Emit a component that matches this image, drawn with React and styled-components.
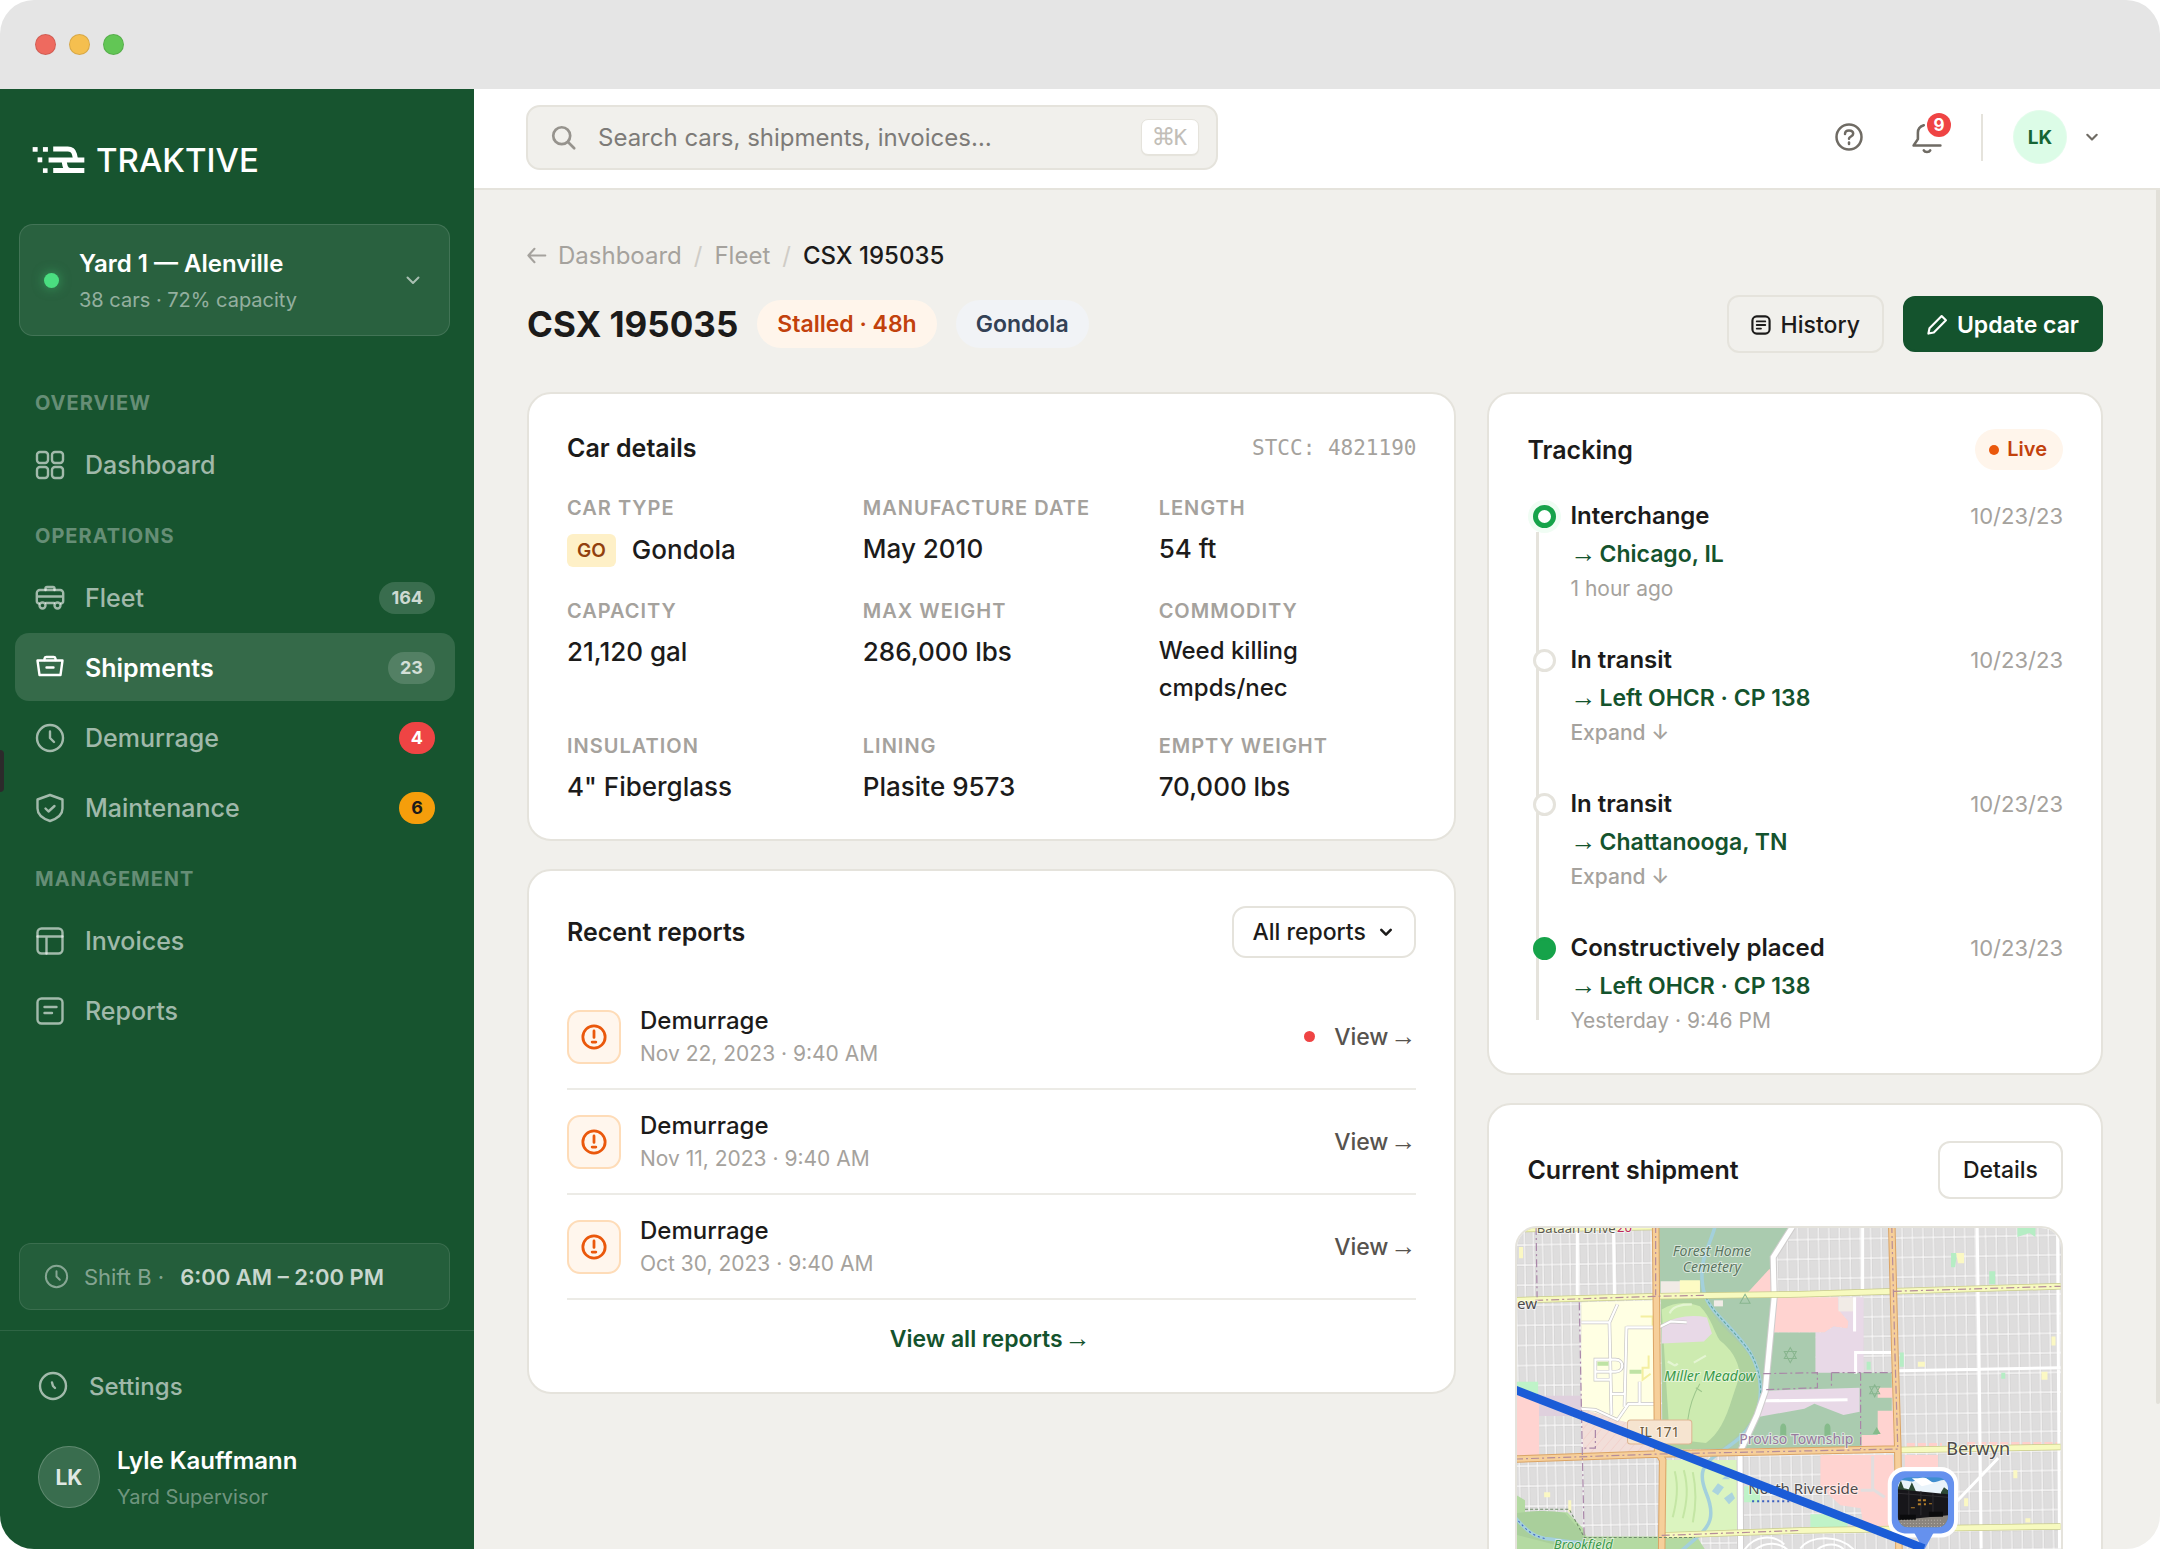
import * as React from 'react';
import styled, { createGlobalStyle, css } from 'styled-components';

const colors = {
  green: '#17542f',
  greenDeep: '#14532d',
  page: '#f1f0ec',
  line: '#e5e3dc',
  ink: '#1c1b1a',
  text: '#57534e',
  muted: '#a5a29d',
  orange: '#c2410c',
  red: '#ef4444'
};

const nav = [
  {
    title: 'Overview',
    items: [{ icon: 'dashboard', label: 'Dashboard' }]
  },
  {
    title: 'Operations',
    items: [
      { icon: 'fleet', label: 'Fleet', count: 164 },
      { icon: 'shipments', label: 'Shipments', count: 23, active: true },
      { icon: 'clock', label: 'Demurrage', count: 4, tone: 'danger' },
      { icon: 'shield', label: 'Maintenance', count: 6, tone: 'warning' }
    ]
  },
  {
    title: 'Management',
    items: [
      { icon: 'invoices', label: 'Invoices' },
      { icon: 'reports', label: 'Reports' }
    ]
  }
];

const details = [
  { label: 'Car type', value: 'Gondola', code: 'GO' },
  { label: 'Manufacture date', value: 'May 2010' },
  { label: 'Length', value: '54 ft' },
  { label: 'Capacity', value: '21,120 gal' },
  { label: 'Max weight', value: '286,000 lbs' },
  { label: 'Commodity', value: 'Weed killing cmpds/nec', small: true },
  { label: 'Insulation', value: '4" Fiberglass' },
  { label: 'Lining', value: 'Plasite 9573' },
  { label: 'Empty weight', value: '70,000 lbs' }
];

const reports = [
  { date: 'Nov 22, 2023 · 9:40 AM', unread: true },
  { date: 'Nov 11, 2023 · 9:40 AM' },
  { date: 'Oct 30, 2023 · 9:40 AM' }
];

const events = [
  { title: 'Interchange', place: 'Chicago, IL', note: '1 hour ago', state: 'current' },
  { title: 'In transit', place: 'Left OHCR · CP 138' },
  { title: 'In transit', place: 'Chattanooga, TN' },
  {
    title: 'Constructively placed',
    place: 'Left OHCR · CP 138',
    note: 'Yesterday · 9:46 PM',
    state: 'done'
  }
];

const shapes = {
  dashboard: (
    <>
      <rect x="1" y="1" width="11" height="11" rx="3" />
      <rect x="16" y="1" width="11" height="11" rx="3" />
      <rect x="1" y="16" width="11" height="11" rx="3" />
      <rect x="16" y="16" width="11" height="11" rx="3" />
    </>
  ),
  fleet: (
    <>
      <path d="M9.5 6V4.5a1.5 1.5 0 0 1 1.5-1.5h6a1.5 1.5 0 0 1 1.5 1.5V6" />
      <path d="M3 19.5a2.5 2.5 0 0 1-2.200-2.500V9A3 3 0 0 1 4 6h20a3 3 0 0 1 3.200 3v8a2.500 2.500 0 0 1-2.200 2.500M10 19h8M1 12.500h26" />
      <circle cx="6.500" cy="21.500" r="3" />
      <circle cx="21.500" cy="21.500" r="3" />
    </>
  ),
  shipments: (
    <>
      <path d="M8.500 6V4.500A2 2 0 0 1 10.500 3h7a2 2 0 0 1 2 1.500V6" />
      <path d="M1.500 6.500h25L24.500 21h-21zM10.500 13.500h7" />
    </>
  ),
  clock: (
    <>
      <circle cx="14" cy="14" r="13" />
      <path d="M14 7.500v6.500l4 4" />
    </>
  ),
  settings: (
    <>
      <circle cx="14" cy="14" r="13" />
      <path d="M13 10.500l1 3.500 2 2" />
    </>
  ),
  shield: (
    <>
      <path d="M14 1l12.500 4.500v9c0 6-5 10-12.500 12.500C6.500 24.500 1.500 20.500 1.500 14.500v-9z" />
      <path d="M9.500 14.500l3 3 6-5.500" />
    </>
  ),
  invoices: (
    <>
      <rect x="1.500" y="1.500" width="25" height="25" rx="4" />
      <path d="M1.500 9.500h25M10.500 9.500v17" />
    </>
  ),
  reports: (
    <>
      <rect x="1.500" y="1.500" width="25" height="25" rx="4" />
      <path d="M8.500 10h12M8.500 16h7.500" />
    </>
  ),
  history: (
    <>
      <rect x="2" y="2" width="24" height="24" rx="6" />
      <path d="M8 9h12M8 14h12M8 19h6" strokeWidth="2.500" />
    </>
  ),
  pencil: <path d="M2 26l1.500-7.500L20.500 1.500l6 6L9.500 24.500z" />,
  alert: (
    <>
      <circle cx="14" cy="14" r="12" />
      <path d="M14 7.500v7M12 19.500h4" />
    </>
  ),
  search: (
    <>
      <circle cx="12" cy="12" r="9.500" />
      <path d="M19 19l7 7" />
    </>
  ),
  help: (
    <>
      <circle cx="14" cy="14" r="12.500" />
      <path d="M10 11c0-2.500 2-3.500 4-3.500s4.200 1 4.200 3.300c0 2.700-4.200 2.700-4.200 5" />
      <path d="M14 19.500v1.500" />
    </>
  ),
  bell: (
    <>
      <path d="M11 3C7.500 4 5.500 6.500 5.500 10v6L1.500 22h25" />
      <path d="M11 26.500c1 2 5 2 6 0" />
    </>
  ),
  chevron: <path d="M3 9l11 11 11-11" />,
  back: <path d="M27 14H2M11 4L2 14l9 10" />
};

const Icon = ({ name, size = 28, weight = 2.400 }) => (
  <Glyph viewBox="0 0 28 28" $size={size} strokeWidth={weight} aria-hidden="true">
    {shapes[name]}
  </Glyph>
);

const Logo = () => (
  <LogoMark viewBox="0 0 160 84" aria-hidden="true">
    <g fill="#fff">
      <rect x="2" y="3" width="15" height="14" />
      <rect x="33" y="3" width="15" height="14" />
      <rect x="17" y="34" width="14" height="15" />
      <rect x="33" y="67" width="14" height="14" />
    </g>
    <g fill="none" stroke="#fff" strokeWidth="15">
      <path d="M64 9h44q16 0 20 15l4 18" />
      <path d="M50 42h108" />
      <path d="M97 42q2 32 18 32" />
      <path d="M64 74h94" />
    </g>
  </LogoMark>
);

const Sidebar = () => (
  <Side>
    <Brand href="#home">
      <Logo />
      TRAKTIVE
    </Brand>
    <YardButton type="button">
      <YardDot />
      <Stack>
        <SideName>Yard 1 — Alenville</SideName>
        <SideNote>38 cars · 72% capacity</SideNote>
      </Stack>
      <Icon name="chevron" size={14} weight={4} />
    </YardButton>
    <Nav aria-label="Main">
      {nav.map(group => (
        <React.Fragment key={group.title}>
          <NavTitle>{group.title}</NavTitle>
          <NavList>
            {group.items.map(item => (
              <li key={item.label}>
                <NavLink href={`#${item.label.toLowerCase()}`} $active={item.active}>
                  <Icon name={item.icon} />
                  <NavText>{item.label}</NavText>
                  {item.count && <Count $tone={item.tone}>{item.count}</Count>}
                </NavLink>
              </li>
            ))}
          </NavList>
        </React.Fragment>
      ))}
    </Nav>
    <Shift>
      <Icon name="clock" size={23} />
      <span>Shift B ·</span>
      <strong>6:00 AM – 2:00 PM</strong>
    </Shift>
    <SideFooter>
      <SettingsLink href="#settings">
        <Icon name="settings" />
        Settings
      </SettingsLink>
      <Profile>
        <Avatar $size={62}>LK</Avatar>
        <Stack>
          <SideName>Lyle Kauffmann</SideName>
          <SideNote $dim>Yard Supervisor</SideNote>
        </Stack>
      </Profile>
    </SideFooter>
  </Side>
);

const TopBar = () => (
  <Top>
    <SearchBox>
      <Icon name="search" weight={3} size={25} />
      <SearchInput
        type="search"
        aria-label="Search"
        placeholder="Search cars, shipments, invoices…"
      />
      <Kbd>
        <span>⌘</span>K
      </Kbd>
    </SearchBox>
    <TopActions>
      <IconButton type="button" aria-label="Help">
        <Icon name="help" weight={2.500} />
      </IconButton>
      <IconButton type="button" aria-label="Notifications">
        <Icon name="bell" size={30} />
        <Badge>9</Badge>
      </IconButton>
      <UserButton type="button">
        <Avatar $size={54} $light>LK</Avatar>
        <Icon name="chevron" size={12} weight={5} />
      </UserButton>
    </TopActions>
  </Top>
);

const CarDetails = () => (
  <Card $bottom={32}>
    <CardHead $height={32} $gap={30}>
      <CardTitle>Car details</CardTitle>
      <Stcc>STCC: 4821190</Stcc>
    </CardHead>
    <DetailGrid>
      {details.map(item => (
        <div key={item.label}>
          <DetailLabel>{item.label}</DetailLabel>
          <DetailValue $small={item.small} $tall={!!item.code}>
            {item.code && <CarCode>{item.code}</CarCode>}
            {item.value}
          </DetailValue>
        </div>
      ))}
    </DetailGrid>
  </Card>
);

const RecentReports = () => (
  <Card $top={35} $bottom={37}>
    <CardHead $height={52} $gap={27}>
      <CardTitle>Recent reports</CardTitle>
      <SelectWrap>
        <Select aria-label="Filter reports" defaultValue="all">
          <option value="all">All reports</option>
        </Select>
        <Icon name="chevron" size={12} weight={6} />
      </SelectWrap>
    </CardHead>
    <ul>
      {reports.map(report => (
        <ReportRow key={report.date}>
          <ReportIcon>
            <Icon name="alert" size={26} weight={3} />
          </ReportIcon>
          <Stack>
            <ReportName>Demurrage</ReportName>
            <Note>{report.date}</Note>
          </Stack>
          {report.unread && <UnreadDot />}
          <ViewLink href="#report">
            View<Arrow>→</Arrow>
          </ViewLink>
        </ReportRow>
      ))}
    </ul>
    <ViewAll href="#reports">
      View all reports<Arrow>→</Arrow>
    </ViewAll>
  </Card>
);

const Tracking = () => (
  <Card $top={35} $bottom={36}>
    <CardHead $height={41} $gap={26}>
      <CardTitle>Tracking</CardTitle>
      <Live>Live</Live>
    </CardHead>
    <Timeline>
      {events.map((event, i) => (
        <Event key={i}>
          <Marker $state={event.state} />
          <div>
            <EventTitle>{event.title}</EventTitle>
            <EventPlace>
              <Arrow>→</Arrow>
              {event.place}
            </EventPlace>
            {event.note ? <Note>{event.note}</Note> : <Expand type="button">Expand ↓</Expand>}
          </div>
          <EventDate>10/23/23</EventDate>
        </Event>
      ))}
    </Timeline>
  </Card>
);

const RouteMap = () => (
  <MapSvg viewBox="2 3 541 400" preserveAspectRatio="xMinYMin slice" role="img" aria-label="Route map">
    <defs>
      <pattern id="blocksWest" width="9" height="20" patternUnits="userSpaceOnUse" patternTransform="rotate(-1)">
        <rect width="9" height="20" fill="#f8f7f7" />
        <rect x="0.800" y="0.800" width="7.600" height="18.500" fill="#c9c8c8" />
        <rect x="1.200" y="1.200" width="6.800" height="17.700" fill="#dedddd" />
      </pattern>
      <pattern id="blocksEast" width="10.400" height="19.500" patternUnits="userSpaceOnUse" patternTransform="rotate(-1)">
        <rect width="10.400" height="19.500" fill="#f8f7f7" />
        <rect x="0.800" y="0.800" width="9" height="18" fill="#c9c8c8" />
        <rect x="1.200" y="1.200" width="8.200" height="17.200" fill="#dedddd" />
      </pattern>
      <pattern id="hatch" width="7" height="7" patternUnits="userSpaceOnUse" patternTransform="rotate(40)">
        <rect width="7" height="7" fill="#f2ded9" />
        <path d="M0 0v7" stroke="#f3c9c4" />
      </pattern>
      <clipPath id="photo">
        <rect x="381" y="251" width="50" height="50" rx="11" />
      </clipPath>
    </defs>
    <rect width="260" height="403" fill="url(#blocksWest)" />
    <rect x="224" width="321" height="403" fill="url(#blocksEast)" />

    {/* land use */}
    <path d="M66 77l75-2 2 128-38-8-39-12z" fill="#ffffe3" />
    <path d="M66 183l40 12 37 10v20l-75 3z" fill="url(#hatch)" />
    <path d="M0 169h24v60H0z" fill="#ffd3d0" />
    <path d="M0 156h23v12H0z" fill="#bff3c8" />
    <path d="M24 170h42v20H24z" fill="#dfd0dd" />
    <path d="M143 2h133l-19 30-2 38H143z" fill="#aacbaf" />
    <path d="M145 56h39v12h-39z" fill="#f1ebe6" />
    <path d="M164 55h20v14h-20z" fill="#fdfbc4" />
    <path d="M231 68l22-24h3v25z" fill="#ffd3d0" />
    <path d="M190 72h68l-9 90-8 27-15 34h-79V72z" fill="#aacbaf" />
    <path d="M145 72h45c4 18 18 30 30 42 14 14 22 28 24 42 2 24-8 46-38 66l-59 2z" fill="#afd29f" />
    <path d="M146 84c14-8 26-8 38-3 12 12 14 26 20 34 10 8 18 18 20 34l-8 24c-6 20-14 36-26 44l-36-4z" fill="#cdebb0" />
    <path d="M146 99c14-8 30-10 45-7l5 16-8 8-42 2z" fill="#e8d9e7" />
    <path d="M198 75h9v6h-9z" fill="#f1ebe6" />
    <path d="M259 72h63v12l10 12-1 7-14-2-9 6h-52z" fill="#ffd3d0" />
    <path d="M322 72h25v76h-48v-41h9l9-6 14 2 1-7-10-12z" fill="#e8d9e7" />
    <path d="M322 72h15v14h-15z" fill="#f1ebe6" />
    <path d="M256 107h43v40h76v75H226l11-26 10-34z" fill="#aacbaf" />
    <path d="M249 165l94-3v24l-16 3-29-11-10 5-46 8z" fill="#e8d9e7" />
    <path d="M361 162h15v10h-15zM361 185h16v39h-32v-15h16z" fill="#ffd3d0" />
    <path d="M304 229h72l5 72-34-1-3-18-20-3-20-18z" fill="#ffd3d0" />
    <path d="M388 229h33v16h-33z" fill="#ffd3d0" />
    <path d="M294 288h37v15h-37zM228 260h16v16h-16z" fill="#bff3c8" />
    <path d="M150 234h72v72h-72z" fill="#dbf4bf" />
    <path d="M0 268l10 6v12h42l16 16 3 8h110l10 16v74H0z" fill="#b4daa2" />
    <path d="M0 287c20-3 38-3 50 0l16 18 3 9-30 4-39-10z" fill="#a9cf9b" />
    <path d="M159 245c4 16 2 30-2 46M168 244c5 18 3 32-1 48M177 246c3 14 4 30 0 50" fill="none" stroke="#c4e6a4" strokeWidth="2" />
    <path d="M196 265l6-8 6 4-6 8zM208 272l8-6 3 6-6 6zM206 253l4-4 4 4z" fill="#abd4de" />

    {/* little parks */}
    <g fill="#b5edc4">
      <path d="M500 2h18v10l-6-4-6 2-6 2zM434 28h6l-2 14h-4zM472 46h6v13h-6zM383 127h4v14h-4zM484 147h4v6h-4zM350 136h4v8h-4z" />
    </g>
    <g fill="#fbf8c3">
      <path d="M439 28h8v10h-6zM534 111h4v9h-4zM524 146h6v8h-6zM401 136h7v5h-7zM496 244h4v8h-4zM447 272h4v8h-4zM508 292h5v4h-5zM4 22h4v11H4zM29 266h6v5h-6zM53 274h3v12h-3z" />
    </g>
    <path d="M390 219h35M450 218h90" stroke="#ffcfcb" strokeWidth="4" strokeDasharray="8 3" />

    {/* loops inside the hospital campus */}
    <g fill="none" stroke="#c6c4c4" strokeWidth="3.500">
      <path d="M66 97h28l8-18M94 97l2 92M66 183l14 1 22 10 11-16h28M111 101l-2 80M96 168h14M111 102h32l12-6 16 1M80 134h20c9 0 9 12 0 12H80zM80 146v8h16M124 156v22" />
    </g>
    <g fill="none" stroke="#fff" strokeWidth="2.200">
      <path d="M66 97h28l8-18M94 97l2 92M66 183l14 1 22 10 11-16h28M111 101l-2 80M96 168h14M111 102h32l12-6 16 1M80 134h20c9 0 9 12 0 12H80zM80 146v8h16M124 156v22" />
      <path d="M152 136c6 2 6 6 10 2M178 137l12-7M154 88c2-6 10-9 22-9" stroke="#e4f5d2" />
    </g>
    <path d="M82 136h11v4H82zM114 144h12v4h-12z" fill="#bfe3a5" />
    <path d="M133 130v12h-6v12l8-6M125 91h12v9" fill="none" stroke="#f4efa0" strokeWidth="2" />
    <path d="M172 194c2-16 6-26 12-36M180 162l6 4" fill="none" stroke="#9dc68c" />

    {/* water */}
    <g fill="none" stroke="#a3d0dc" strokeWidth="3.500">
      <path d="M199 2c-6 20-13 30-13 45 0 20 4 28 12 38 12 14 24 24 36 42 14 24 13 50 2 70-8 14-22 22-31 29-20 12-22 22-15 40 10 24 4 34-10 46l-14 12" />
      <path d="M0 291c8 8 14 18 30 21 18 2 24 4 40 4" />
    </g>
    <path d="M0 291c8 8 14 18 30 21" fill="none" stroke="#3c5fc0" strokeDasharray="2 3" />
    <path d="M190 72c10 20 34 38 46 58 10 20 12 44 2 62" fill="none" stroke="#5fa59d" strokeDasharray="3 2" />

    {/* white streets */}
    <g fill="none" stroke="#fff" strokeWidth="3">
      <path d="M62 2v68M98 2l1 68M460 2l2 140 2 180M346 2v64M540 2l2 320M382 145l161-3M249 175l82-1M338 72v34M339 148v-21h36M437 278l44-46" />
      <path d="M356 230v33l12 8M344 264h12" stroke="#e2dede" />
    </g>
    <path d="M276 2l-19 30 1 40-9 94-8 23-17 37 1 174" fill="none" stroke="#cfcdcd" strokeWidth="7" />
    <path d="M276 2l-19 30 1 40-9 94-8 23-17 37 1 174" fill="none" stroke="#fff" strokeWidth="5" />
    <path d="M228 324c10-16 30-16 40-6M238 324c12-10 26-8 34 0M284 322c10-14 40-14 54 2M300 324c8-8 22-8 28 0M400 324c14-18 26-22 40-20" fill="none" stroke="#fff" strokeWidth="2" />

    {/* arterials, casing first */}
    <g fill="none" stroke="#c9cc8c" strokeWidth="6.500">
      <path d="M0 4l140-2M0 75l140-4 144-2 93-3 166-5M382 224l161-3M146 309l138-5 259-4" />
    </g>
    <g fill="none" stroke="#f7fabf" strokeWidth="5">
      <path d="M0 4l140-2M0 75l140-4 144-2 93-3 166-5M382 224l161-3M146 309l138-5 259-4" />
    </g>
    <g fill="none" stroke="#dba465" strokeWidth="7.500">
      <path d="M140 0l2 226 5 8-1 90v76M0 233l142-5 142-3 97-2M375 0l3 122 3 100 2 178" />
    </g>
    <g fill="none" stroke="#f6cf9a" strokeWidth="5.500">
      <path d="M140 0l2 226 5 8-1 90v76M0 233l142-5 142-3 97-2M375 0l3 122 3 100 2 178" />
    </g>
    <g fill="none" stroke="#b58d9a" strokeWidth="1.200" strokeDasharray="8 3 2 3">
      <path d="M20 75l120-4 50-1M377 66l166-5M0 233l142-5 142-3 97-2M375 0l3 122 3 100M140 0v70M146 309l138-5" />
      <path d="M21 2l1 70M64 77l3 150 2 90M247 148l54-1v15l-54 2M315 147v15M344 147v76M315 147h60M80 204v18H66" stroke="#a986a8" />
    </g>
    <path d="M10 283h44l15 28h110" fill="none" stroke="#6e8a6a" strokeDasharray="3 2" />
    <path d="M236 275h40" stroke="#3c5fc0" strokeWidth="2" strokeDasharray="2 3" />
    <path d="M268 133l6-11 6 11zM268 126h12l-6 11zM224 78l5-9 5 9zM353 168l5-9 5 9zM353 161h10l-5 10z" fill="none" stroke="#88b58e" />
    <path d="M264 210v-8c0-6 6-6 6 0v8zM308 210v-8c0-6 6-6 6 0v8zM356 208l4-7 4 7z" fill="#86bb8b" />

    <rect x="112" y="194" width="64" height="24" rx="3" fill="#f6e4d0" stroke="#ddb592" />
    <MapText x="144" y="211" $size={14} $fill="#6a5738">IL 171</MapText>
    <MapText x="196" y="31" $size={14} $fill="#5b7561" $italic>Forest Home</MapText>
    <MapText x="196" y="47" $size={14} $fill="#5b7561" $italic>Cemetery</MapText>
    <MapText x="194" y="155" $size={14} $fill="#38984a" $italic>Miller Meadow</MapText>
    <MapText x="280" y="218" $size={14} $fill="#977a9e">Proviso Township</MapText>
    <MapText x="287" y="268" $size={15} $fill="#4d4b4b">North Riverside</MapText>
    <MapText x="461" y="229" $size={18} $fill="#4d4b4b">Berwyn</MapText>
    <MapText x="12" y="84" $size={15} $fill="#4d4b4b">ew</MapText>
    <MapText x="68" y="322" $size={13} $fill="#38984a" $italic>Brookfield</MapText>
    <MapText x="61" y="8" $size={13} $fill="#5c5a50">Bataan Drive</MapText>
    <MapText x="109" y="7" $size={13} $fill="#c0285a">20</MapText>

    {/* pin with the car photo */}
    <rect x="373" y="243" width="66" height="66" rx="15" fill="#6591ee" stroke="#fff" strokeWidth="4" />
    <path d="M394 300h26l-13 24z" fill="#6591ee" />
    <g clipPath="url(#photo)">
      <rect x="381" y="251" width="50" height="50" fill="#3f8ed0" />
      <path d="M381 256c6-5 12 2 18-2s10-3 14 1 12-4 18 0v16h-50z" fill="#e9f3fa" />
      <path d="M395 252h14l8 5-12 3z" fill="#fff" />
      <path d="M381 262l3-8 3 8 5 1 3-7 4 9h-18zM424 266l3-5 4 3v8h-7z" fill="#2d4a35" />
      <path d="M381 288l50-6v19h-50z" fill="#8b857e" />
      <path d="M381 263l50 5v21l-50 5z" fill="#17161a" />
      <path d="M381 267l50 4M392 264v26M404 265v24M416 267v20" stroke="#2f2d31" />
      <path d="M401 273h3v2h-3zM406 273h3v2h-3zM401 277h3v2h-3zM407 277h2v2h-2zM394 281h4v1h-4zM412 277h3v1h-3z" fill="#b57f2b" />
      <path d="M383 291h16M412 288h14" stroke="#0b0b0d" strokeWidth="5" />
      <path d="M381 297h50M384 294h40M390 300h36" stroke="#b5aea6" strokeDasharray="1 2" />
    </g>
    <path d="M0 164l407 158" stroke="#1b5cd7" strokeWidth="8.500" />
  </MapSvg>
);

const App = () => (
  <>
    <GlobalStyle />
    <Window>
      <TitleBar>
        <Light $color="#ee6a5f" />
        <Light $color="#f5bf4f" />
        <Light $color="#62c655" />
      </TitleBar>
      <Shell>
        <EdgeHandle />
        <Sidebar />
        <Main>
          <TopBar />
          <Scroll>
            <Content>
              <Crumbs aria-label="Breadcrumb">
                <Icon name="back" size={19} weight={3} />
                <a href="#dashboard">Dashboard</a>
                <i>/</i>
                <a href="#fleet">Fleet</a>
                <i>/</i>
                <b>CSX 195035</b>
              </Crumbs>
              <PageHead>
                <PageTitle>CSX 195035</PageTitle>
                <Tag $warm>Stalled · 48h</Tag>
                <Tag>Gondola</Tag>
                <PageActions>
                  <Button type="button">
                    <Icon name="history" size={20} weight={3} />
                    History
                  </Button>
                  <Button type="button" $primary>
                    <Icon name="pencil" size={20} weight={3} />
                    Update car
                  </Button>
                </PageActions>
              </PageHead>
              <Columns>
                <Column>
                  <CarDetails />
                  <RecentReports />
                </Column>
                <Column>
                  <Tracking />
                  <Card $top={35}>
                    <CardHead $height={59} $gap={27}>
                      <CardTitle>Current shipment</CardTitle>
                      <Button type="button" $plain>Details</Button>
                    </CardHead>
                    <MapFrame>
                      <RouteMap />
                    </MapFrame>
                  </Card>
                </Column>
              </Columns>
            </Content>
            <ScrollThumb />
          </Scroll>
        </Main>
      </Shell>
    </Window>
  </>
);

const GlobalStyle = createGlobalStyle`
  * {
    box-sizing: border-box;
  }
  body {
    margin: 0;
    background: #fff;
    color: ${colors.ink};
    font-family: Inter, 'Liberation Sans', sans-serif;
    font-size: 24px;
  }
  a {
    color: inherit;
    text-decoration: none;
  }
  button, input, select {
    font: inherit;
    color: inherit;
  }
  h1, h2, p, ul, ol, dl {
    margin: 0;
    padding: 0;
    list-style: none;
  }
`;

const Window = styled.div`
  display: flex;
  flex-direction: column;
  height: calc(100vh - 1px);
  border-radius: 34px;
  overflow: hidden;
`;

const TitleBar = styled.div`
  display: flex;
  flex: none;
  align-items: center;
  gap: 13px;
  height: 89px;
  padding: 0 35px;
  background: #e5e5e5;
`;

const Light = styled.span`
  width: 21px;
  height: 21px;
  border: 1px solid rgba(0, 0, 0, 0.12);
  border-radius: 50%;
  background: ${({ $color }) => $color};
`;

const Shell = styled.div`
  position: relative;
  display: flex;
  flex: 1;
  min-height: 0;
`;

const EdgeHandle = styled.span`
  position: absolute;
  top: 661px;
  left: 0;
  width: 4px;
  height: 42px;
  border-radius: 0 4px 4px 0;
  background: #2c2a2b;
`;

const Glyph = styled.svg`
  flex: none;
  width: ${({ $size }) => $size}px;
  height: ${({ $size }) => $size}px;
  fill: none;
  stroke: currentColor;
  stroke-linecap: round;
  stroke-linejoin: round;
  overflow: visible;
`;

const Stack = styled.div`
  flex: 1;
  min-width: 0;
  text-align: left;
`;

const Arrow = styled.span`
  margin: 0 3px 0 2px;
  font-family: 'Liberation Sans', sans-serif;
  font-size: 26px;
  font-weight: 400;
  line-height: 1;
`;

const Side = styled.aside`
  display: flex;
  flex: none;
  flex-direction: column;
  width: 474px;
  background: ${colors.green};
  color: rgba(255, 255, 255, 0.6);
`;

const Brand = styled.a`
  display: flex;
  align-items: center;
  gap: 11px;
  height: 142px;
  padding: 0 32px;
  color: #fff;
  font-size: 33px;
  font-weight: 500;
`;

const LogoMark = styled.svg`
  width: 53px;
  height: 28px;
`;

const YardButton = styled.button`
  display: flex;
  align-items: center;
  gap: 20px;
  height: 112px;
  margin: -7px 24px 29px 19px;
  padding: 0 29px 0 24px;
  border: 1px solid rgba(255, 255, 255, 0.12);
  border-radius: 14px;
  background: rgba(255, 255, 255, 0.08);
`;

const YardDot = styled.span`
  width: 15px;
  height: 15px;
  border-radius: 50%;
  background: #4ade80;
  box-shadow: 0 0 12px rgba(74, 222, 128, 0.5);
`;

const SideName = styled.div`
  color: #fff;
  font-size: 24px;
  font-weight: 600;
  line-height: 40px;
`;

const SideNote = styled.div`
  color: rgba(255, 255, 255, ${({ $dim }) => ($dim ? 0.4 : 0.5)});
  font-size: 20px;
  line-height: 32px;
`;

const Nav = styled.nav`
  flex: 1;
  padding: 0 19px 0 15px;
`;

const NavTitle = styled.h2`
  padding: 24px 20px 13px;
  color: rgba(255, 255, 255, 0.35);
  font-size: 20px;
  font-weight: 700;
  letter-spacing: 1px;
  line-height: 28px;
  text-transform: uppercase;
`;

const NavList = styled.ul`
  display: grid;
  gap: 2px;
`;

const NavLink = styled.a`
  display: flex;
  align-items: center;
  gap: 21px;
  height: 68px;
  padding: 1px 20px 0 21px;
  border-radius: 14px;
  font-size: 25px;
  font-weight: 500;
  ${({ $active }) =>
    $active &&
    css`
      background: rgba(255, 255, 255, 0.13);
      color: #fff;
      font-weight: 600;
    `};
`;

const NavText = styled.span`
  flex: 1;
`;

const tones = {
  danger: css`
    background: ${colors.red};
    color: #fff;
  `,
  warning: css`
    background: #f59e0b;
    color: ${colors.ink};
  `
};

const Count = styled.span`
  padding: 0 12px;
  border-radius: 16px;
  background: rgba(255, 255, 255, 0.15);
  color: rgba(255, 255, 255, 0.75);
  font-size: 18px;
  font-weight: 700;
  line-height: 32px;
  ${({ $tone }) => tones[$tone]};
`;

const Shift = styled.div`
  display: flex;
  align-items: center;
  gap: 16px;
  height: 67px;
  margin: 0 24px 20px 19px;
  padding: 0 25px;
  border: 1px solid rgba(255, 255, 255, 0.1);
  border-radius: 12px;
  background: rgba(255, 255, 255, 0.06);
  color: rgba(255, 255, 255, 0.45);
  font-size: 22px;

  strong {
    color: rgba(255, 255, 255, 0.75);
    font-weight: 600;
  }
`;

const SideFooter = styled.div`
  padding: 22px 0 27px 38px;
  border-top: 1px solid rgba(255, 255, 255, 0.1);
`;

const SettingsLink = styled.a`
  display: flex;
  align-items: center;
  gap: 22px;
  height: 66px;
  padding-left: 1px;
  font-weight: 500;
`;

const Profile = styled.div`
  display: flex;
  align-items: center;
  gap: 17px;
  height: 90px;
  margin-top: 13px;
`;

const Avatar = styled.span`
  display: grid;
  flex: none;
  place-items: center;
  width: ${({ $size }) => $size}px;
  height: ${({ $size }) => $size}px;
  border: 1px solid rgba(255, 255, 255, 0.2);
  border-radius: 50%;
  background: ${({ $light }) => ($light ? '#dcfce7' : 'rgba(255, 255, 255, 0.15)')};
  color: ${({ $light }) => ($light ? '#166534' : 'rgba(255, 255, 255, 0.85)')};
  font-size: ${({ $light }) => ($light ? 19 : 21)}px;
  font-weight: 700;
`;

const Main = styled.main`
  display: flex;
  flex: 1;
  flex-direction: column;
  min-width: 0;
  background: ${colors.page};
`;

const Top = styled.header`
  display: flex;
  flex: none;
  align-items: center;
  justify-content: space-between;
  height: 101px;
  padding: 0 62px 3px 52px;
  border-bottom: 2px solid ${colors.line};
  background: #fff;
`;

const SearchBox = styled.label`
  display: flex;
  align-items: center;
  gap: 22px;
  width: 692px;
  height: 65px;
  padding: 0 17px 0 23px;
  border: 2px solid ${colors.line};
  border-radius: 14px;
  background: ${colors.page};
  color: #96938d;
`;

const SearchInput = styled.input`
  flex: 1;
  min-width: 0;
  padding: 0;
  border: 0;
  outline: 0;
  background: none;
  color: ${colors.ink};

  &::placeholder {
    color: #7d7b78;
    opacity: 1;
  }
`;

const Kbd = styled.kbd`
  display: flex;
  align-items: center;
  height: 36px;
  padding: 0 11px;
  border: 1px solid ${colors.line};
  border-radius: 7px;
  background: #fff;
  box-shadow: 0 1px 1px ${colors.line};
  color: #c2beb8;
  font-family: 'DejaVu Sans Mono', monospace;
  font-size: 22px;

  span {
    font-size: 34px;
    line-height: 34px;
  }
`;

const TopActions = styled.div`
  display: flex;
  align-items: center;
  gap: 49px;
  color: #6f6b64;
`;

const IconButton = styled.button`
  position: relative;
  display: grid;
  padding: 0;
  border: 0;
  background: none;
`;

const Badge = styled.span`
  position: absolute;
  top: -9px;
  right: -9px;
  width: 24px;
  height: 24px;
  border-radius: 50%;
  background: ${colors.red};
  color: #fff;
  font-size: 17px;
  font-weight: 700;
  line-height: 24px;
  text-align: center;
`;

const UserButton = styled.button`
  display: flex;
  align-items: center;
  gap: 19px;
  margin-left: -10px;
  padding: 0 0 0 32px;
  border: 0;
  background: linear-gradient(${colors.line}, ${colors.line}) left center / 2px 47px no-repeat;
`;

const Scroll = styled.div`
  display: flex;
  flex: 1;
  align-items: flex-start;
  min-height: 0;
  overflow: hidden;
`;

const ScrollThumb = styled.span`
  flex: none;
  width: 4px;
  height: 1214px;
  border-radius: 0 0 2px 2px;
  background: #e2e0d9;
`;

const Content = styled.div`
  flex: 1;
  min-width: 0;
  padding: 48px 53px;
`;

const Crumbs = styled.nav`
  display: flex;
  align-items: center;
  gap: 12px;
  height: 34px;
  color: ${colors.muted};

  i {
    color: #cfccc6;
    font-style: normal;
  }

  b {
    color: ${colors.ink};
    font-weight: 500;
  }
`;

const PageHead = styled.div`
  display: flex;
  align-items: center;
  gap: 19px;
  height: 58px;
  margin: 23px 0 39px;
`;

const PageTitle = styled.h1`
  font-size: 35px;
  font-weight: 700;
`;

const Tag = styled.span`
  padding: 0 20px;
  border-radius: 24px;
  background: ${({ $warm }) => ($warm ? '#fff5eb' : '#f1f3f6')};
  color: ${({ $warm }) => ($warm ? colors.orange : '#334155')};
  font-size: 23px;
  font-weight: 600;
  line-height: 48px;
`;

const PageActions = styled.div`
  display: flex;
  align-items: center;
  gap: 19px;
  margin-left: auto;
`;

const Button = styled.button`
  display: flex;
  align-items: center;
  gap: 10px;
  height: 58px;
  padding: 2px 22px 0;
  border: 2px solid ${colors.line};
  border-radius: 12px;
  background: ${({ $plain }) => ($plain ? '#fff' : 'transparent')};
  font-size: 23px;
  font-weight: 500;
  ${({ $plain }) => $plain && 'padding: 0 23px;'};
  ${({ $primary }) =>
    $primary &&
    css`
      height: 56px;
      border-color: ${colors.greenDeep};
      background: ${colors.greenDeep};
      color: #fff;
      font-weight: 600;
    `};
`;

const Columns = styled.div`
  display: grid;
  grid-template-columns: minmax(0, 302fr) minmax(0, 200fr);
  gap: 31px;
  align-items: start;
`;

const Column = styled.div`
  display: grid;
  gap: 28px;
`;

const Card = styled.section`
  padding: ${({ $top = 38 }) => $top}px 38px ${({ $bottom = 38 }) => $bottom}px;
  border: 2px solid ${colors.line};
  border-radius: 24px;
  background: #fff;
`;

const CardHead = styled.div`
  display: flex;
  align-items: center;
  justify-content: space-between;
  height: ${({ $height }) => $height}px;
  margin-bottom: ${({ $gap }) => $gap}px;
`;

const CardTitle = styled.h2`
  font-size: 25px;
  font-weight: 600;
`;

const Stcc = styled.span`
  color: ${colors.muted};
  font-family: 'DejaVu Sans Mono', monospace;
  font-size: 21px;
`;

const DetailGrid = styled.dl`
  display: grid;
  grid-template-columns: repeat(3, minmax(0, 1fr));
  gap: 26px 38px;
`;

const DetailLabel = styled.dt`
  margin-bottom: 7px;
  color: ${colors.muted};
  font-size: 20px;
  font-weight: 600;
  letter-spacing: 1px;
  line-height: 28px;
  text-transform: uppercase;
  white-space: nowrap;
`;

const DetailValue = styled.dd`
  display: flex;
  align-items: center;
  gap: 16px;
  min-height: ${({ $tall }) => ($tall ? 42 : 40)}px;
  margin: 0;
  font-size: ${({ $small }) => ($small ? 24 : 26)}px;
  font-weight: 500;
  line-height: ${({ $small }) => ($small ? 37 : 40)}px;
`;

const CarCode = styled.span`
  padding: 0 10px;
  border-radius: 6px;
  background: #fef0c7;
  color: #92400e;
  font-size: 19px;
  font-weight: 600;
  line-height: 33px;
`;

const SelectWrap = styled.span`
  display: grid;
  align-items: center;

  > * {
    grid-area: 1 / 1;
  }

  svg {
    justify-self: end;
    margin-right: 24px;
    pointer-events: none;
  }
`;

const Select = styled.select`
  height: 52px;
  padding: 0 48px 0 18px;
  border: 2px solid ${colors.line};
  border-radius: 14px;
  appearance: none;
  background: #fff;
  font-size: 23px;
  font-weight: 500;
`;

const ReportRow = styled.li`
  display: flex;
  align-items: center;
  gap: 19px;
  height: 105px;
  border-bottom: 2px solid #ecebe6;
`;

const ReportIcon = styled.span`
  display: grid;
  place-items: center;
  width: 54px;
  height: 54px;
  border: 2px solid #fedcb8;
  border-radius: 13px;
  background: #fff6ed;
  color: #ea580c;
`;

const ReportName = styled.div`
  font-weight: 500;
  line-height: 34px;
`;

const Note = styled.div`
  color: ${colors.muted};
  font-size: 21px;
  line-height: 32px;
`;

const UnreadDot = styled.span`
  width: 11px;
  height: 11px;
  border-radius: 50%;
  background: ${colors.red};
`;

const ViewLink = styled.a`
  color: ${colors.text};
  font-size: 23px;
  font-weight: 500;

  ${Arrow} {
    margin-right: 0;
  }
`;

const ViewAll = styled.a`
  display: block;
  padding-top: 23px;
  color: ${colors.greenDeep};
  font-size: 23px;
  font-weight: 600;
  line-height: 32px;
  text-align: center;
`;

const Live = styled.span`
  display: flex;
  align-items: center;
  gap: 8px;
  padding: 0 16px 0 14px;
  border-radius: 21px;
  background: #fff5eb;
  color: ${colors.orange};
  font-size: 20px;
  font-weight: 600;
  line-height: 41px;

  &::before {
    width: 10px;
    height: 10px;
    border-radius: 50%;
    background: #ea580c;
    content: '';
  }
`;

const Timeline = styled.ol`
  padding-left: 6px;
  background: linear-gradient(${colors.line}, ${colors.line}) 9px 36px / 3px 488px no-repeat;
`;

const Event = styled.li`
  display: flex;
  min-height: 144px;

  &:last-child {
    min-height: 0;
  }

  > div {
    flex: 1;
  }
`;

const Marker = styled.span`
  flex: none;
  width: 23px;
  height: 23px;
  margin: 9px 14px 0 0;
  border: 3px solid ${colors.line};
  border-radius: 50%;
  background: #fff;
  ${({ $state }) =>
    $state === 'current' &&
    css`
      border: 5px solid #16a34a;
      box-shadow: 0 0 0 5px #f0fdf4;
    `};
  ${({ $state }) =>
    $state === 'done' &&
    css`
      border-color: #16a34a;
      background: #16a34a;
    `};
`;

const EventTitle = styled.div`
  font-weight: 600;
  line-height: 40px;
`;

const EventPlace = styled.div`
  color: ${colors.greenDeep};
  font-size: 23px;
  font-weight: 600;
  line-height: 37px;

  ${Arrow} {
    margin-left: 0;
  }
`;

const Expand = styled.button`
  display: block;
  padding: 0;
  border: 0;
  background: none;
  color: ${colors.muted};
  font-size: 21px;
  font-weight: 500;
  line-height: 32px;
`;

const EventDate = styled.time`
  color: ${colors.muted};
  font-size: 22px;
  line-height: 40px;
`;

const MapFrame = styled.div`
  margin-left: -12px;
  border: 2px solid ${colors.line};
  border-radius: 22px;
  overflow: hidden;
`;

const MapSvg = styled.svg`
  display: block;
  width: 100%;
  height: 400px;
`;

const MapText = styled.text`
  fill: ${({ $fill }) => $fill};
  font-family: 'Noto Sans', sans-serif;
  font-size: ${({ $size }) => $size}px;
  font-style: ${({ $italic }) => ($italic ? 'italic' : 'normal')};
  paint-order: stroke;
  stroke: rgba(255, 255, 255, 0.55);
  stroke-width: 2px;
  text-anchor: middle;
`;

export default App;
